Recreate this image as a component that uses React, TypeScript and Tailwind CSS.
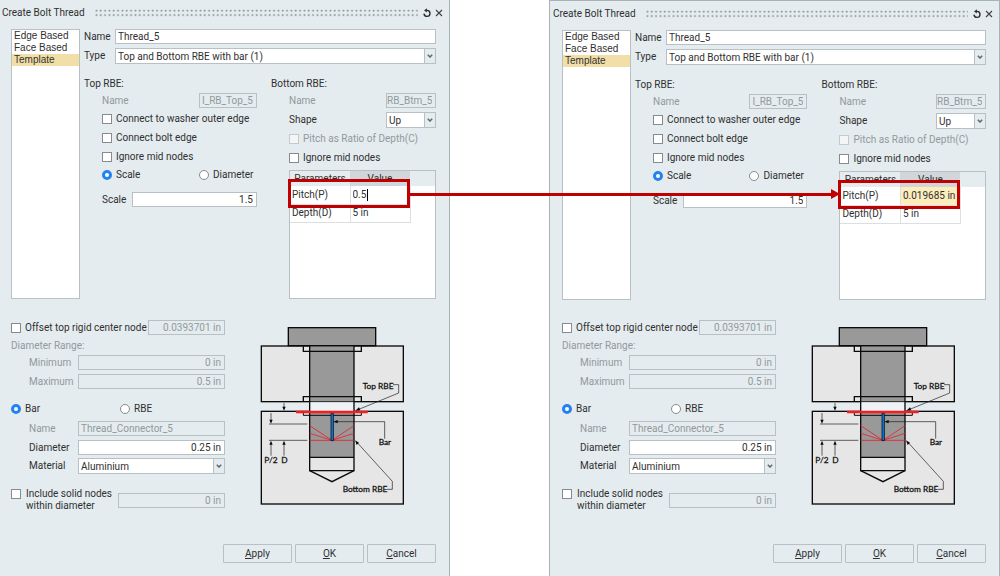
import { useId } from "react";
import type { InputHTMLAttributes, ReactNode } from "react";

const DIM = "text-[#92999c]";

function Field({
  align = "right",
  className = "",
  ...props
}: InputHTMLAttributes<HTMLInputElement> & { align?: "left" | "right" }) {
  return (
    <input
      type="text"
      className={`h-[15px] min-w-0 border border-[#b9c0c4] bg-white text-[#303030] outline-none disabled:bg-[#e4ecef] disabled:text-[#92999c] ${
        align === "right" ? "pr-[3px] text-right" : "pl-[2px] text-left"
      } ${className}`}
      {...props}
    />
  );
}

function Dropdown({ id, options, className = "" }: { id: string; options: string[]; className?: string }) {
  return (
    <div className={`relative h-4 min-w-0 ${className}`}>
      <select
        id={id}
        className="block h-4 w-full appearance-none border border-[#b9c0c4] bg-white pt-px pl-[2px] text-[#303030] outline-none"
      >
        {options.map((option) => (
          <option key={option}>{option}</option>
        ))}
      </select>
      <span className="pointer-events-none absolute inset-y-0 right-0 flex w-3 items-center justify-center border border-[#b9c0c4] bg-[#e4ecef]">
        <svg width="6" height="4" viewBox="0 0 6 4" fill="none" stroke="#60686c" strokeWidth="1.5">
          <path d="M0.8 0.7 3 3 5.2 0.7" />
        </svg>
      </span>
    </div>
  );
}

function Check({ label, disabled = false, className = "" }: { label: ReactNode; disabled?: boolean; className?: string }) {
  return (
    <label className={`flex h-[19px] items-center gap-1 whitespace-nowrap ${disabled ? DIM : ""} ${className}`}>
      <input
        type="checkbox"
        disabled={disabled}
        className="size-[10px] shrink-0 appearance-none border border-[#858b8e] bg-white checked:bg-[#2a84ee] disabled:border-[#c3c9cc] disabled:bg-[#f3f5f6]"
      />
      {label}
    </label>
  );
}

function Radio({ name, label, checked = false, className = "" }: { name: string; label: string; checked?: boolean; className?: string }) {
  return (
    <label className={`flex items-center gap-1 whitespace-nowrap ${className}`}>
      <input
        type="radio"
        name={name}
        defaultChecked={checked}
        className="size-[10px] shrink-0 appearance-none rounded-full border border-[#858b8e] bg-white checked:border-3 checked:border-[#2482f0]"
      />
      {label}
    </label>
  );
}

function BoltDiagram() {
  return (
    <svg width="145" height="187" viewBox="30 6 435 561" role="img" aria-label="Bolt section" className="shrink-0">
      <g stroke="#0a0a0a" strokeWidth="4">
        <rect x="34" y="84" width="426" height="167" fill="#e6e6e6" />
        <rect x="34" y="280" width="426" height="278" fill="#e6e6e6" />
        <rect x="115" y="29" width="262" height="54" fill="#999" />
      </g>
      <rect x="179" y="253" width="133" height="26" fill="#eef2f4" />
      <rect x="179" y="86" width="133" height="164" fill="#999" />
      <rect x="179" y="282" width="133" height="136" fill="#999" />
      <g stroke="#0a0a0a" strokeWidth="4" fill="none">
        <path d="M160 85V100H334V85" />
        <path d="M160 251V236H334V251" />
        <path d="M160 281V292H334V281" strokeWidth="3" />
        <path d="M179 84V458H312V84" />
        <path d="M179 418H312" />
        <path d="M179 458 246 491 312 458" />
      </g>
      <g stroke="#e8202a" strokeWidth="2.5" fill="none">
        <path d="M179 323 246 367 312 323M179 346 246 367 312 346M179 367H312" />
      </g>
      <path d="M138 282H353" stroke="#fb1a1e" strokeWidth="7" />
      <rect x="243" y="287" width="7" height="81" fill="#1476d2" stroke="#06182c" strokeWidth="2.5" />
      <g stroke="#1a1a1a" strokeWidth="2" fill="none">
        <path d="M57 318H172M57 367H172" />
        <path d="M63 285V310M63 375V413M102 255V272M102 375V413" />
        <path d="M429 200H446V225L324 275" />
        <path d="M256 311H404V362" />
        <path d="M411 514H427V490L320 372" />
      </g>
      <g fill="#0a0a0a">
        <path d="M63 317 58 305H68ZM63 368 58 380H68ZM102 278 97 266H107ZM102 368 97 380H107Z" />
        <path d="M316 278 327 268 331 277ZM250 311 263 306V316ZM315 367 327 374 320 381Z" />
      </g>
      <g fill="#111" fontFamily="Lato, 'Open Sans', sans-serif" fontSize="25" stroke="#111" strokeWidth="0.8">
        <text x="338" y="212">Top RBE</text>
        <text x="386" y="382">Bar</text>
        <text x="43" y="436">P/2</text>
        <text x="94" y="436">D</text>
        <text x="278" y="523">Bottom RBE</text>
      </g>
    </svg>
  );
}

function TitleBar() {
  const dots = useId();
  return (
    <header className="flex h-[26px] items-center pr-[5px] pl-[2px]">
      <h2 className="whitespace-nowrap">Create Bolt Thread</h2>
      <svg className="ml-[10px] h-2 min-w-0 flex-1" aria-hidden="true">
        <pattern id={dots} width="4.333" height="4.5" patternUnits="userSpaceOnUse">
          <rect x="0.6" y="0.8" width="1.6" height="1.6" fill="#80878b" />
        </pattern>
        <rect width="100%" height="8" fill={`url(#${dots})`} />
      </svg>
      <button type="button" aria-label="Reset" className="ml-1">
        <svg width="10" height="10" viewBox="0 0 10 10" fill="none" stroke="#303030" strokeWidth="1.4">
          <path d="M4.2 2.4H5.2A3 3 0 1 1 2 5.6" />
          <path d="M4.9 0.2V4.6L2 2.4Z" fill="#303030" stroke="none" />
        </svg>
      </button>
      <button type="button" aria-label="Close" className="ml-[2px]">
        <svg width="10" height="10" viewBox="0 0 10 10" fill="none" stroke="#404040" strokeWidth="1.1">
          <path d="M2 2 8 8M8 2 2 8" />
        </svg>
      </button>
    </header>
  );
}

function ParameterTable({ pitch, valueClass }: { pitch: ReactNode; valueClass: string }) {
  return (
    <div className="relative mt-[3px] flex-1 border border-[#b9c0c4] bg-white">
      <table className="w-full table-fixed border-collapse text-left">
        <thead>
          <tr className="h-[15px] bg-[#e4ecef]">
            <th className="w-[60px] p-0 text-center font-normal">Parameters</th>
            <th className="w-[60px] bg-[#d0d6d9] p-0 text-center font-normal">Value</th>
            <td className="p-0" />
          </tr>
        </thead>
        <tbody>
          <tr className="h-[18px]">
            <td className="border-r border-b border-[#dcdfe1] p-0 pl-[2px]">Pitch(P)</td>
            <td className={`border-r border-b border-[#dcdfe1] p-0 pl-[2px] whitespace-nowrap ${valueClass}`}>{pitch}</td>
            <td className="p-0" />
          </tr>
          <tr className="h-[18px]">
            <td className="border-r border-b border-[#dcdfe1] p-0 pl-[2px]">Depth(D)</td>
            <td className="border-r border-b border-[#dcdfe1] p-0 pl-[2px]">5 in</td>
            <td className="p-0" />
          </tr>
        </tbody>
      </table>
      <div className="pointer-events-none absolute top-[8px] left-[-2px] h-[29px] w-[122px] border-3 border-[#c00000]" />
    </div>
  );
}

function BoltDialog({ pitch, valueClass, className }: { pitch: ReactNode; valueClass: string; className: string }) {
  const uid = useId();
  const id = (name: string) => `${uid}-${name}`;
  const kinds = ["Edge Based", "Face Based", "Template"];

  return (
    <section className={`flex min-w-0 flex-col border-[#a9b1b5] bg-[#e4ecef] pb-[13px] ${className}`}>
      <TitleBar />

      <div className="mt-[3px] mr-[13px] ml-[11px] flex min-h-[270px] gap-1">
        <ul className="w-[69px] shrink-0 border border-[#b9c0c4] bg-white font-['Liberation_Sans',sans-serif]">
          {kinds.map((kind) => (
            <li key={kind}>
              <button
                type="button"
                className={`block h-[12px] w-full pl-[2px] text-left leading-[12px] ${
                  kind === "Template" ? "bg-[#f2dfa8]" : ""
                }`}
              >
                {kind}
              </button>
            </li>
          ))}
        </ul>

        <div className="flex min-w-0 flex-1 flex-col">
          <div className="flex items-center">
            <label htmlFor={id("name")} className="w-[31px]">Name</label>
            <Field id={id("name")} align="left" defaultValue="Thread_5" className="flex-1" />
          </div>
          <div className="mt-1 flex items-center">
            <label htmlFor={id("type")} className="w-[31px]">Type</label>
            <Dropdown id={id("type")} options={["Top and Bottom RBE with bar (1)"]} className="flex-1" />
          </div>

          <div className="mt-[14px] grid flex-1 grid-cols-[173fr_165fr] gap-[14px]">
            <div className="flex min-w-0 flex-col">
              <h3>Top RBE:</h3>
              <div className="mt-[3px] flex flex-col pl-[18px]">
                <div className="flex items-center justify-between">
                  <label htmlFor={id("top-name")} className={DIM}>Name</label>
                  <Field id={id("top-name")} disabled defaultValue="I_RB_Top_5" className="w-[58px]" />
                </div>
                <Check label="Connect to washer outer edge" className="mt-px" />
                <Check label="Connect bolt edge" />
                <Check label="Ignore mid nodes" />
                <div className="flex h-[18px] items-center justify-between">
                  <Radio name={id("size")} label="Scale" checked />
                  <Radio name={id("size")} label="Diameter" className="w-[58px]" />
                </div>
                <div className="mt-2 flex items-center">
                  <label htmlFor={id("scale")} className="w-[30px]">Scale</label>
                  <Field id={id("scale")} defaultValue="1.5" className="flex-1" />
                </div>
              </div>
            </div>

            <div className="flex min-w-0 flex-col">
              <h3>Bottom RBE:</h3>
              <div className="mt-[3px] flex flex-1 flex-col pl-[18px]">
                <div className="flex items-center justify-between">
                  <label htmlFor={id("bottom-name")} className={DIM}>Name</label>
                  <Field id={id("bottom-name")} disabled defaultValue="RB_Btm_5" className="w-[50px]" />
                </div>
                <div className="mt-1 flex items-center justify-between">
                  <label htmlFor={id("shape")}>Shape</label>
                  <Dropdown id={id("shape")} options={["Up", "Down"]} className="w-[50px]" />
                </div>
                <Check label="Pitch as Ratio of Depth(C)" disabled className="mt-px" />
                <Check label="Ignore mid nodes" />
                <ParameterTable pitch={pitch} valueClass={valueClass} />
              </div>
            </div>
          </div>
        </div>
      </div>

      <div className="mt-auto mr-[13px] ml-[11px] flex gap-[35px]">
        <div className="flex w-[214px] flex-col">
          <div className="flex h-[15px] items-center justify-between">
            <Check label="Offset top rigid center node" />
            <Field aria-label="Offset" disabled defaultValue="0.0393701 in" className="w-[77px]" />
          </div>
          <h3 className={`mt-[5px] ${DIM}`}>Diameter Range:</h3>
          <div className="mt-[3px] flex items-center pl-[18px]">
            <label htmlFor={id("min")} className={`w-[49px] ${DIM}`}>Minimum</label>
            <Field id={id("min")} disabled defaultValue="0 in" className="flex-1" />
          </div>
          <div className="mt-1 flex items-center pl-[18px]">
            <label htmlFor={id("max")} className={`w-[49px] ${DIM}`}>Maximum</label>
            <Field id={id("max")} disabled defaultValue="0.5 in" className="flex-1" />
          </div>
          <div className="mt-[13px] flex h-[14px] items-center">
            <Radio name={id("kind")} label="Bar" checked className="w-[109px]" />
            <Radio name={id("kind")} label="RBE" />
          </div>
          <div className="mt-[5px] flex items-center pl-[18px]">
            <label htmlFor={id("connector")} className={`w-[49px] ${DIM}`}>Name</label>
            <Field id={id("connector")} align="left" disabled defaultValue="Thread_Connector_5" className="flex-1" />
          </div>
          <div className="mt-1 flex items-center pl-[18px]">
            <label htmlFor={id("diameter")} className="w-[49px]">Diameter</label>
            <Field id={id("diameter")} defaultValue="0.25 in" className="flex-1" />
          </div>
          <div className="mt-[3px] flex items-center pl-[18px]">
            <label htmlFor={id("material")} className="w-[49px]">Material</label>
            <Dropdown id={id("material")} options={["Aluminium", "Steel"]} className="flex-1" />
          </div>
          <div className="mt-[14px] flex items-end justify-between">
            <label className="flex items-start gap-[5px]">
              <input
                type="checkbox"
                className="mt-px size-[10px] shrink-0 appearance-none border border-[#858b8e] bg-white checked:bg-[#2a84ee]"
              />
              <span className="whitespace-nowrap">
                Include solid nodes
                <br />
                within diameter
              </span>
            </label>
            <Field aria-label="Solid node diameter" disabled defaultValue="0 in" className="mb-1 w-[107px]" />
          </div>
        </div>
        <BoltDiagram />
      </div>

      <footer className="mt-8 mr-[13px] flex justify-end gap-[3px]">
        {["Apply", "OK", "Cancel"].map((text) => (
          <button key={text} type="button" className="h-[19px] w-[69px] rounded-[1px] border border-[#b9c0c4]">
            <u>{text[0]}</u>
            {text.slice(1)}
          </button>
        ))}
      </footer>
    </section>
  );
}

export default function App() {
  return (
    <main className="relative grid min-h-screen grid-cols-[450fr_451fr] gap-[99px] bg-white font-['Roboto','Liberation_Sans',sans-serif] text-[10px] leading-[12px] text-[#303030]">
      <BoltDialog
        className="border-r"
        valueClass="bg-white"
        pitch={
          <input
            type="text"
            aria-label="Pitch value"
            defaultValue="0.5"
            className="block w-[15px] border-r border-black outline-none"
          />
        }
      />
      <BoltDialog className="border-x border-t pl-px" valueClass="bg-[#fdedbd]" pitch="0.019685 in" />

      <div className="pointer-events-none absolute top-[189px] left-[41%] flex w-[43%] items-center">
        <div className="h-[3px] flex-1 bg-[#c00000]" />
        <svg width="9" height="10" viewBox="0 0 9 10" fill="#c00000">
          <path d="M0 0 9 5 0 10Z" />
        </svg>
      </div>
    </main>
  );
}
